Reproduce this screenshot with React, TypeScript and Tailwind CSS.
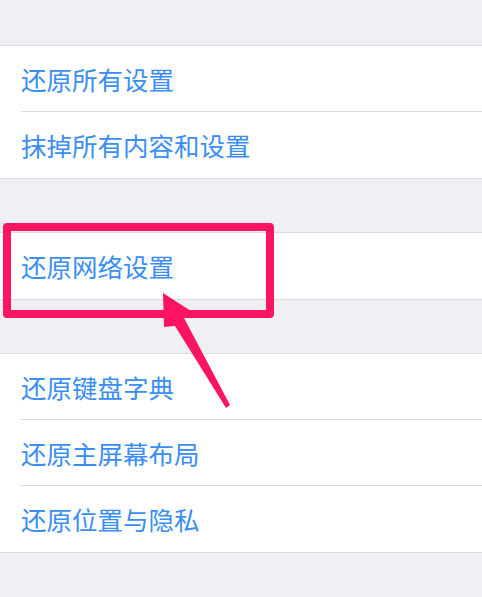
const groups: string[][] = [
  ['还原所有设置', '抹掉所有内容和设置'],
  ['还原网络设置'],
  ['还原键盘字典', '还原主屏幕布局', '还原位置与隐私'],
]

function Row({ label, last }: { label: string; last: boolean }) {
  return (
    <div className="pl-[21px]">
      <div className={`flex h-[66px] items-center ${last ? '' : 'border-b border-[#dcdce0]'}`}>
        <span className="text-[25.5px] leading-none text-[#3a8ef5]">{label}</span>
      </div>
    </div>
  )
}

function Arrow() {
  return (
    <svg className="pointer-events-none absolute left-0 top-0" width="482" height="597" viewBox="0 0 482 597">
      <polygon
        points="163,293 191,311 184,318 230,405 226,408 175,326 164,327"
        fill="#ff1462"
      />
    </svg>
  )
}

export default function App() {
  return (
    <div
      className="relative h-[597px] w-[482px] overflow-hidden bg-[#efeff4]"
      style={{ fontFamily: '"Noto Sans CJK SC", "Noto Sans", sans-serif' }}
    >
      <div className="flex flex-col gap-[53px] pt-[45px]">
        {groups.map((rows, gi) => (
          <div key={gi} className="border-y border-[#dcdce0] bg-white">
            {rows.map((label, i) => (
              <Row key={label} label={label} last={i === rows.length - 1} />
            ))}
          </div>
        ))}
      </div>
      <div className="pointer-events-none absolute left-[3px] top-[223px] h-[95px] w-[271px] rounded-[4px] border-[8px] border-[#ff1462]" />
      <Arrow />
    </div>
  )
}
